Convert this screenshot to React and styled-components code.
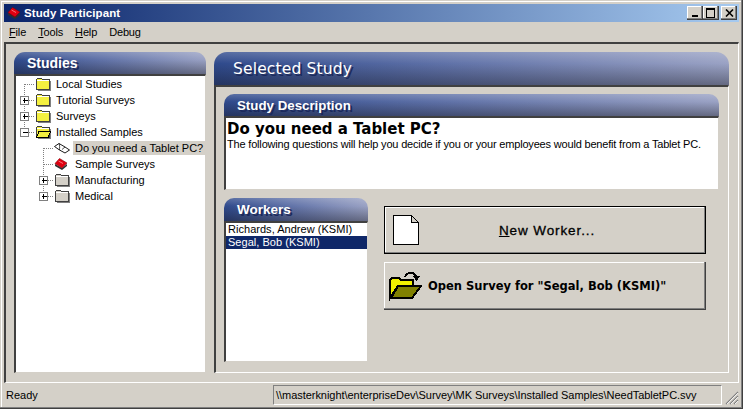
import React from 'react';
import styled, { createGlobalStyle } from 'styled-components';

const UI_FONT = '"Liberation Sans", Arial, sans-serif';
const HEAD_FONT = '"DejaVu Sans", Verdana, sans-serif';
const FACE = '#d4d0c8';

const GlobalStyle = createGlobalStyle`
  html, body {
    margin: 0;
    padding: 0;
    background: ${FACE};
  }
  * {
    box-sizing: border-box;
  }
`;

const Window = styled.div`
  width: 743px;
  height: 409px;
  padding: 4px 4px 4px 4px;
  display: flex;
  flex-direction: column;
  background: ${FACE};
  font: 11px ${UI_FONT};
  color: #000;
  overflow: hidden;
  box-shadow: inset -1px -1px 0 #404040, inset -2px -2px 0 #808080, inset 1px 1px 0 ${FACE}, inset 2px 2px 0 #fff;
`;

const TitleBar = styled.div`
  height: 18px;
  width: 735px;
  flex: none;
  display: flex;
  align-items: center;
  padding: 0 2px 0 3px;
  background: linear-gradient(to right, #0a246a, #a6caf0);
`;

const TitleText = styled.span`
  margin-left: 3px;
  font: bold 11.5px ${UI_FONT};
  letter-spacing: 0.1px;
  color: #fff;
  flex: 1;
`;

const CaptionButtons = styled.div`
  display: flex;
`;

const CaptionButton = styled.button`
  width: 16px;
  height: 14px;
  margin-left: ${({ $gap }) => ($gap ? 2 : 0)}px;
  padding: 0;
  display: flex;
  align-items: center;
  justify-content: center;
  background: ${FACE};
  border: 0;
  box-shadow: inset -1px -1px 0 #404040, inset -2px -2px 0 #808080, inset 1px 1px 0 #fff;
`;

const MenuBar = styled.div`
  height: 20px;
  flex: none;
  display: flex;
  align-items: center;
  padding-left: 5px;
  gap: 12px;
`;

const MenuItem = styled.span`
  font-size: 11px;
  letter-spacing: -0.15px;
  u {
    text-underline-offset: 1px;
  }
`;

const Frame = styled.div`
  width: 735px;
  height: 341px;
  flex: none;
  display: flex;
  gap: 8px;
  padding: 8px 9px 9px 8px;
  border-top: 2px solid #404040;
  border-left: 2px solid #404040;
  border-right: 1px solid #fff;
  border-bottom: 1px solid #fff;
`;

const Column = styled.div`
  display: flex;
  flex-direction: column;
  width: ${({ $width }) => $width}px;
  flex: none;
`;

const Header = styled.div`
  height: ${({ $height }) => $height}px;
  flex: none;
  display: flex;
  align-items: center;
  padding-left: ${({ $indent }) => $indent}px;
  border-radius: ${({ $radius }) => $radius}px ${({ $radius }) => $radius}px 0 0;
  background:
    linear-gradient(to bottom, rgba(255, 255, 255, 0.2), rgba(255, 255, 255, 0) 35%, rgba(20, 20, 30, 0.4)),
    linear-gradient(to right, #2f4a8c, #6072a8 45%, #9aa2c4);
  color: #fff;
  font-family: ${({ $wide }) => ($wide ? HEAD_FONT : UI_FONT)};
  font-size: ${({ $size }) => $size}px;
  font-weight: ${({ $wide }) => ($wide ? 400 : 700)};
  letter-spacing: ${({ $wide }) => ($wide ? 0.15 : 0)}px;
  text-shadow: 2px 2px 0 #1c2a5c;
`;

const Sunken = styled.div`
  background: #fff;
  border-top: 2px solid #404040;
  border-left: 2px solid #404040;
  border-right: 1px solid ${({ $light }) => $light};
  border-bottom: 1px solid ${({ $light }) => $light};
`;

const Tree = styled(Sunken)`
  flex: 1;
  display: flex;
  flex-direction: column;
`;

const TreeRow = styled.div`
  height: 16px;
  display: flex;
  align-items: center;
`;

const TreeIcon = styled.span`
  width: 16px;
  height: 16px;
  flex: none;
  display: flex;
  align-items: center;
`;

const TreeLabel = styled.span`
  margin-left: 3px;
  padding: 1px 2px;
  font-size: 11px;
  white-space: nowrap;
  background: ${({ $active }) => ($active ? FACE : 'transparent')};
`;

const Body = styled.div`
  flex: 1;
  display: flex;
  flex-direction: column;
  padding: 7px 9px 10px 8px;
  border-top: 2px solid #404040;
  border-left: 2px solid #404040;
  border-right: 1px solid #fff;
  border-bottom: 1px solid #fff;
`;

const Description = styled(Sunken)`
  height: 74px;
  padding: 2px 1px;
`;

const StudyName = styled.div`
  font: bold 15px/18px ${HEAD_FONT};
  letter-spacing: -0.02px;
`;

const StudyText = styled.div`
  font-size: 11px;
  line-height: 13px;
  letter-spacing: -0.18px;
  white-space: nowrap;
`;

const LowerRow = styled.div`
  flex: 1;
  display: flex;
  gap: 16px;
  margin-top: 8px;
`;

const WorkerList = styled(Sunken)`
  flex: 1;
`;

const WorkerRow = styled.div`
  height: 13px;
  line-height: 13px;
  padding-left: 2px;
  letter-spacing: 0.03px;
  background: ${({ $selected }) => ($selected ? '#0f2768' : 'transparent')};
  color: ${({ $selected }) => ($selected ? '#fff' : '#000')};
`;

const Actions = styled.div`
  display: flex;
  flex-direction: column;
  gap: 8px;
  padding-top: 8px;
  width: 322px;
`;

const ActionButton = styled.button`
  height: 48px;
  display: flex;
  align-items: center;
  padding: 0 0 0 ${({ $pad }) => $pad}px;
  background: ${FACE};
  color: #000;
  border: 0;
  box-shadow: ${({ $default }) =>
    $default
      ? 'inset 0 0 0 1px #000, inset -2px -2px 0 #808080, inset 2px 2px 0 #fff'
      : 'inset -1px -1px 0 #404040, inset -2px -2px 0 #808080, inset 1px 1px 0 #fff'};
`;

const NewLabel = styled.span`
  flex: 1;
  padding-right: 31px;
  text-align: center;
  font: 13.5px ${UI_FONT};
  letter-spacing: 0.9px;
  -webkit-text-stroke: 0.3px #000;
`;

const OpenLabel = styled.span`
  margin-left: 6px;
  font: bold 11.5px ${HEAD_FONT};
  letter-spacing: 0;
`;

const StatusBar = styled.div`
  flex: 1;
  display: flex;
  align-items: center;
  padding: 2px 0 0 2px;
`;

const StatusText = styled.span`
  flex: 1;
`;

const StatusPath = styled.div`
  width: 449px;
  height: 20px;
  line-height: 18px;
  padding-left: 2px;
  font-size: 11px;
  letter-spacing: -0.04px;
  white-space: nowrap;
  overflow: hidden;
  border-top: 1px solid #808080;
  border-left: 1px solid #808080;
  border-right: 1px solid #fff;
  border-bottom: 1px solid #fff;
`;

const Grip = styled.svg`
  width: 14px;
  height: 14px;
  margin: 6px 0 0 3px;
  flex: none;
`;

// dotted connectors and the +/- box of a tree row
const Connector = ({ level, box, up = true, down = true }) => {
  const cx = level === 1 ? 8.5 : 27.5;
  const width = level === 1 ? 19 : 38;
  return (
    <svg width={width} height={16} shapeRendering="crispEdges" style={{ flex: 'none' }}>
      <path
        d={`M${cx} ${up ? 0 : 8}V${down ? 16 : 8}M${cx} 8.5H${width}`}
        stroke="#808080"
        strokeDasharray="1 1"
        fill="none"
      />
      {box && (
        <>
          <rect x={cx - 4} y={4.5} width={8} height={8} fill="#fff" stroke="#808080" />
          <path d={`M${cx - 2} 8.5h5`} stroke="#000" />
          {box === 'plus' && <path d={`M${cx} 6v5`} stroke="#000" />}
        </>
      )}
    </svg>
  );
};

const FOLDER_YELLOW = '#f4f040';

const Folder = ({ open }) => (
  <svg width="16" height="14" viewBox="0 0 16 14" shapeRendering="crispEdges">
    <path d="M1.5 3.5V2.5L3 1.5H6L7.5 2.5H14.5V12.5H1.5Z" fill={FOLDER_YELLOW} stroke="#404040" />
    <path d="M2 3.5H14" stroke="#fff" />
    <path d="M15.5 4V13.5H3" stroke="#808080" fill="none" />
    {open && <path d="M1.5 12.5L4 6.5H15.5L13 12.5Z" fill={FOLDER_YELLOW} stroke="#000" />}
  </svg>
);

const GreyFolder = () => (
  <svg width="16" height="14" viewBox="0 0 16 14" shapeRendering="crispEdges">
    <path d="M1.5 3.5V2.5L3 1.5H6L7.5 2.5H14.5V12.5H1.5Z" fill={FACE} stroke="#404040" />
    <path d="M2 3.5H14" stroke="#fff" />
    <path d="M15.5 4V13.5H3" stroke="#808080" fill="none" />
  </svg>
);

const OpenBook = () => (
  <svg width="16" height="12" viewBox="0 0 16 12">
    <path d="M0.5 4.5L5 1.5L11 5L15.5 8L11 11L5.5 8Z" fill="#fff" stroke="#000" strokeWidth="0.9" />
    <path d="M5 1.5C6 3 5.5 6.5 5.5 8M11 5L8 7.5" stroke="#000" strokeWidth="0.7" fill="none" />
  </svg>
);

const RedBook = ({ size = 14 }) => (
  <svg width={size} height={size * 0.86} viewBox="0 0 14 12">
    <path d="M1 6V8L8 12L13 8V6L8 10Z" fill="#303030" />
    <path d="M1 5.5L5.5 0.5L13 5L8 10Z" fill="#e00010" stroke="#800008" strokeWidth="0.6" />
    <path d="M4.5 3L9 5.5" stroke="#ff9090" strokeWidth="0.8" />
  </svg>
);

const DocIcon = () => (
  <svg width="26" height="30" viewBox="0 0 26 30" shapeRendering="crispEdges">
    <path d="M0.5 0.5H18L25 7.5V29.5H0.5Z" fill="#fff" stroke="#000" />
    <path d="M18 0.5V7.5H25" fill={FACE} stroke="#000" />
  </svg>
);

const OpenFolderIcon = () => (
  <svg width="33" height="30" viewBox="0 0 33 30" shapeRendering="crispEdges">
    <path d="M1 27V9L3 7H10L12 9H24V15H9L1 27Z" fill="#f0f000" stroke="#000" strokeWidth="2" />
    <path d="M2 27L9 15H32L23 27Z" fill="#808000" stroke="#000" strokeWidth="2" />
    <path d="M16 6C18 1 24 0 27 5" fill="none" stroke="#000" strokeWidth="2" />
    <path d="M24 5H31L27.5 10Z" fill="#000" />
  </svg>
);

const treeItems = [
  { label: 'Local Studies', level: 1, up: false, icon: <Folder /> },
  { label: 'Tutorial Surveys', level: 1, box: 'plus', icon: <Folder /> },
  { label: 'Surveys', level: 1, box: 'plus', icon: <Folder /> },
  { label: 'Installed Samples', level: 1, box: 'minus', down: false, icon: <Folder open /> },
  { label: 'Do you need a Tablet PC?', level: 2, active: true, up: false, icon: <OpenBook /> },
  { label: 'Sample Surveys', level: 2, icon: <RedBook /> },
  { label: 'Manufacturing', level: 2, box: 'plus', icon: <GreyFolder /> },
  { label: 'Medical', level: 2, box: 'plus', down: false, icon: <GreyFolder /> },
];

const App = () => (
  <>
    <GlobalStyle />
    <Window>
      <TitleBar>
        <RedBook size={14} />
        <TitleText>Study Participant</TitleText>
        <CaptionButtons>
          <CaptionButton>
            <svg width="8" height="8" shapeRendering="crispEdges"><rect x="1" y="6" width="6" height="2" /></svg>
          </CaptionButton>
          <CaptionButton>
            <svg width="10" height="10" shapeRendering="crispEdges">
              <path d="M0.5 1.5H8.5V9.5H0.5Z" fill="none" stroke="#000" />
              <path d="M0 1H9" stroke="#000" strokeWidth="2" />
            </svg>
          </CaptionButton>
          <CaptionButton $gap>
            <svg width="9" height="8" viewBox="0 0 9 8">
              <path d="M1 0.5L8 7.5M8 0.5L1 7.5" stroke="#000" strokeWidth="1.6" />
            </svg>
          </CaptionButton>
        </CaptionButtons>
      </TitleBar>
      <MenuBar>
        <MenuItem><u>F</u>ile</MenuItem>
        <MenuItem><u>T</u>ools</MenuItem>
        <MenuItem><u>H</u>elp</MenuItem>
        <MenuItem>Debug</MenuItem>
      </MenuBar>
      <Frame>
        <Column $width={192}>
          <Header $height={22} $radius={11} $indent={13} $size={14}>Studies</Header>
          <Tree $light={FACE}>
            {treeItems.map(({ label, level, box, up, down, active, icon }) => (
              <TreeRow key={label}>
                <Connector level={level} box={box} up={up} down={down} />
                <TreeIcon>{icon}</TreeIcon>
                <TreeLabel $active={active}>{label}</TreeLabel>
              </TreeRow>
            ))}
          </Tree>
        </Column>
        <Column $width={515}>
          <Header $height={33} $radius={13} $indent={19} $size={15.5} $wide>Selected Study</Header>
          <Body>
            <Header $height={22} $radius={10} $indent={13} $size={13.3}>Study Description</Header>
            <Description $light={FACE}>
              <StudyName>Do you need a Tablet PC?</StudyName>
              <StudyText>The following questions will help you decide if you or your employees would benefit from a Tablet PC.</StudyText>
            </Description>
            <LowerRow>
              <Column $width={144}>
                <Header $height={23} $radius={10} $indent={13} $size={13.5}>Workers</Header>
                <WorkerList $light={FACE}>
                  <WorkerRow>Richards, Andrew (KSMI)</WorkerRow>
                  <WorkerRow $selected>Segal, Bob (KSMI)</WorkerRow>
                </WorkerList>
              </Column>
              <Actions>
                <ActionButton $default $pad={9}>
                  <DocIcon />
                  <NewLabel><u>N</u>ew Worker...</NewLabel>
                </ActionButton>
                <ActionButton $pad={5}>
                  <OpenFolderIcon />
                  <OpenLabel>Open Survey for "Segal, Bob (KSMI)"</OpenLabel>
                </ActionButton>
              </Actions>
            </LowerRow>
          </Body>
        </Column>
      </Frame>
      <StatusBar>
        <StatusText>Ready</StatusText>
        <StatusPath>\\masterknight\enterpriseDev\Survey\MK Surveys\Installed Samples\NeedTabletPC.svy</StatusPath>
        <Grip viewBox="0 0 14 14">
          <path d="M1 13L13 1M5 13L13 5M9 13L13 9" stroke="#808080" strokeWidth="1.2" />
          <path d="M2 13L13 2M6 13L13 6M10 13L13 10" stroke="#fff" strokeWidth="0.8" />
        </Grip>
      </StatusBar>
    </Window>
  </>
);

export default App;
